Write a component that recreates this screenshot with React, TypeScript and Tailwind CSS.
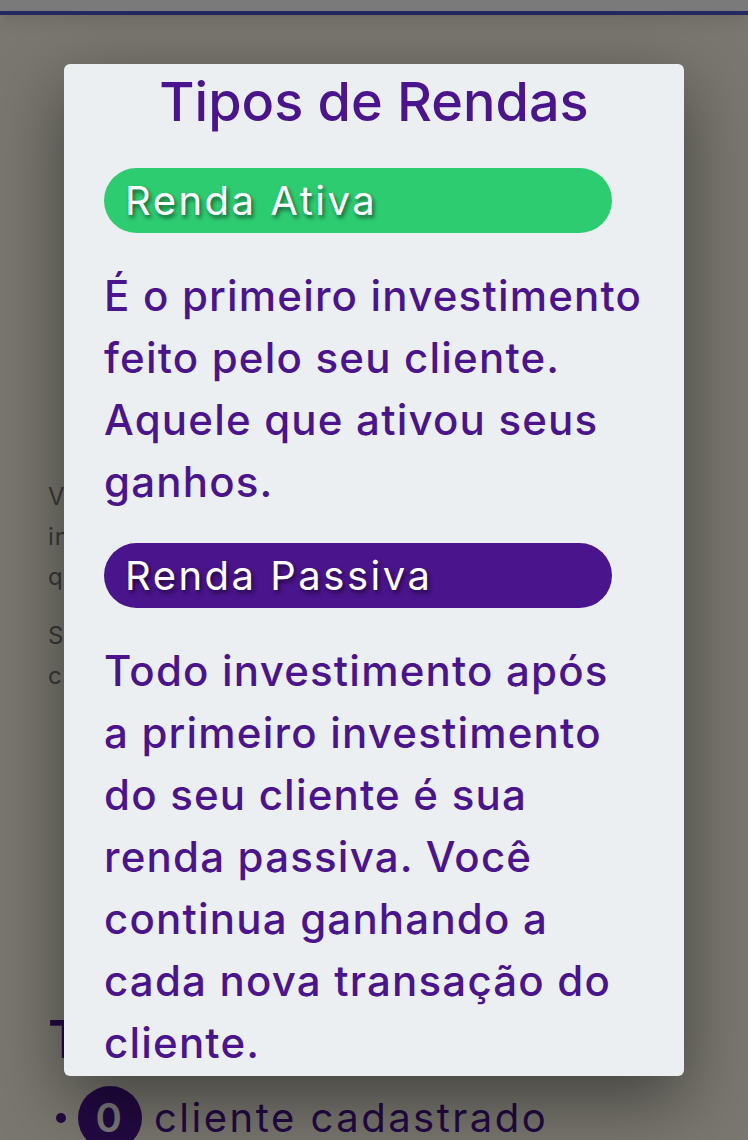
export default function App() {
  return (
    <div className="relative h-[1140px] overflow-hidden bg-[#fdf8e9] font-['Inter',sans-serif]">
      {/* page header, mostly scrolled away */}
      <div className="h-[15px] bg-white border-b-4 border-[#4b58c8] shadow-lg" />

      {/* page content behind the dialog */}
      <div className="px-12 pt-[462px]">
        <p className="text-[24px] leading-[40px] tracking-[1px] text-[#7a7a7a]">
          Você recebe uma comissão a cada investimento
          <br />
          indicado por você, sempre que o cliente
          <br />
          quiser investir.
        </p>
        <p className="mt-[19px] text-[24px] leading-[40px] tracking-[1px] text-[#7a7a7a]">
          Saiba como funciona
          <br />
          cada tipo de renda.
        </p>
        <h2 className="mt-[313px] text-[52px] leading-[62px] font-semibold text-[#4a148c]">
          Total de clientes
        </h2>
        <ul className="mt-[15px] flex items-center gap-3 text-[40px] tracking-[2.5px] text-[#4a148c]">
          <li className="flex items-center gap-3">
            <span className="w-[10px] h-[10px] rounded-full bg-[#4a148c] ml-2" />
            <span className="w-16 h-16 rounded-full bg-[#4a148c] text-white font-semibold flex items-center justify-center">
              0
            </span>
            <span>cliente cadastrado</span>
          </li>
        </ul>
      </div>

      {/* backdrop */}
      <div className="absolute inset-0 bg-black/[0.52]" />

      {/* dialog */}
      <div className="absolute left-16 top-16 w-[620px] h-[1012px] rounded-md bg-[#eceff1] shadow-[0_24px_70px_rgba(0,0,0,0.45)] px-10 pt-1">
        <h1 className="text-center text-[54px] leading-[68px] font-medium text-[#4a148c]">
          Tipos de Rendas
        </h1>

        <div className="mt-[32px] w-[508px] h-[65px] rounded-full bg-[#2ecc71] flex items-center px-[21px]">
          <span className="text-[40px] tracking-[2.5px] text-white [text-shadow:2px_3px_4px_rgba(0,0,0,0.55)]">
            Renda Ativa
          </span>
        </div>
        <p className="mt-[32px] whitespace-nowrap text-[42px] leading-[62px] tracking-[1.2px] font-medium text-[#4a148c]">
          É o primeiro investimento
          <br />
          feito pelo seu cliente.
          <br />
          Aquele que ativou seus
          <br />
          ganhos.
        </p>

        <div className="mt-[30px] w-[508px] h-[65px] rounded-full bg-[#4a148c] flex items-center px-[21px]">
          <span className="text-[40px] tracking-[2.5px] text-white [text-shadow:2px_3px_4px_rgba(0,0,0,0.55)]">
            Renda Passiva
          </span>
        </div>
        <p className="mt-[32px] whitespace-nowrap text-[42px] leading-[62px] tracking-[1.2px] font-medium text-[#4a148c]">
          Todo investimento após
          <br />
          a primeiro investimento
          <br />
          do seu cliente é sua
          <br />
          renda passiva. Você
          <br />
          continua ganhando a
          <br />
          cada nova transação do
          <br />
          cliente.
        </p>
      </div>
    </div>
  );
}
